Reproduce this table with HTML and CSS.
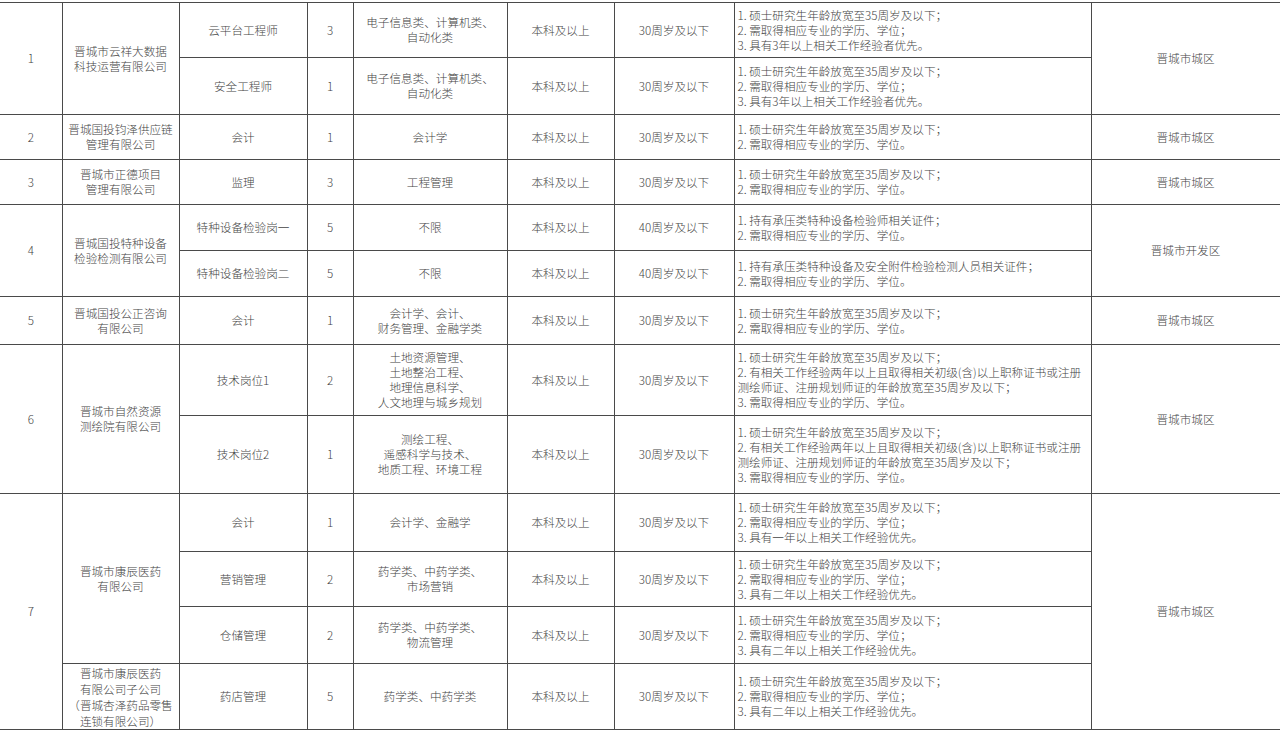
FILE: index.html
```html
<!DOCTYPE html>
<html lang="zh-CN">
<head>
<meta charset="utf-8">
<title>招聘岗位表</title>
<link rel="stylesheet" href="styles.css">
</head>
<body>
<div class="page">
<table class="jobs">
  <colgroup>
    <col class="c-no"><col class="c-co"><col class="c-pos"><col class="c-num"><col class="c-major"><col class="c-edu"><col class="c-age"><col class="c-req"><col class="c-loc">
  </colgroup>
  <tbody>
    <tr class="h55">
      <td rowspan="2" class="first">1</td>
      <td rowspan="2">晋城市云祥大数据<br>科技运营有限公司</td>
      <td>云平台工程师</td>
      <td>3</td>
      <td>电子信息类、计算机类、<br>自动化类</td>
      <td>本科及以上</td>
      <td class="soft-l">30周岁及以下</td>
      <td class="req">1. 硕士研究生年龄放宽至35周岁及以下；<br>2. 需取得相应专业的学历、学位；<br>3. 具有3年以上相关工作经验者优先。</td>
      <td rowspan="2">晋城市城区</td>
    </tr>
    <tr class="h57 sub">
      <td>安全工程师</td>
      <td>1</td>
      <td>电子信息类、计算机类、<br>自动化类</td>
      <td>本科及以上</td>
      <td class="soft-l">30周岁及以下</td>
      <td class="req">1. 硕士研究生年龄放宽至35周岁及以下；<br>2. 需取得相应专业的学历、学位；<br>3. 具有3年以上相关工作经验者优先。</td>
    </tr>
    <tr class="h45">
      <td class="first">2</td>
      <td>晋城国投钧泽供应链<br>管理有限公司</td>
      <td>会计</td>
      <td>1</td>
      <td>会计学</td>
      <td>本科及以上</td>
      <td class="soft-l">30周岁及以下</td>
      <td class="req">1. 硕士研究生年龄放宽至35周岁及以下；<br>2. 需取得相应专业的学历、学位。</td>
      <td>晋城市城区</td>
    </tr>
    <tr class="h45">
      <td class="first">3</td>
      <td>晋城市正德项目<br>管理有限公司</td>
      <td>监理</td>
      <td>3</td>
      <td>工程管理</td>
      <td>本科及以上</td>
      <td class="soft-l">30周岁及以下</td>
      <td class="req">1. 硕士研究生年龄放宽至35周岁及以下；<br>2. 需取得相应专业的学历、学位。</td>
      <td>晋城市城区</td>
    </tr>
    <tr class="h46">
      <td rowspan="2" class="first">4</td>
      <td rowspan="2">晋城国投特种设备<br>检验检测有限公司</td>
      <td>特种设备检验岗一</td>
      <td>5</td>
      <td>不限</td>
      <td>本科及以上</td>
      <td class="soft-l">40周岁及以下</td>
      <td class="req">1. 持有承压类特种设备检验师相关证件；<br>2. 需取得相应专业的学历、学位。</td>
      <td rowspan="2">晋城市开发区</td>
    </tr>
    <tr class="h46 sub">
      <td>特种设备检验岗二</td>
      <td>5</td>
      <td>不限</td>
      <td>本科及以上</td>
      <td class="soft-l">40周岁及以下</td>
      <td class="req">1. 持有承压类特种设备及安全附件检验检测人员相关证件；<br>2. 需取得相应专业的学历、学位。</td>
    </tr>
    <tr class="h48">
      <td class="first">5</td>
      <td>晋城国投公正咨询<br>有限公司</td>
      <td>会计</td>
      <td>1</td>
      <td>会计学、会计、<br>财务管理、金融学类</td>
      <td>本科及以上</td>
      <td class="soft-l">30周岁及以下</td>
      <td class="req">1. 硕士研究生年龄放宽至35周岁及以下；<br>2. 需取得相应专业的学历、学位。</td>
      <td>晋城市城区</td>
    </tr>
    <tr class="h71">
      <td rowspan="2" class="first">6</td>
      <td rowspan="2">晋城市自然资源<br>测绘院有限公司</td>
      <td>技术岗位1</td>
      <td>2</td>
      <td>土地资源管理、<br>土地整治工程、<br>地理信息科学、<br>人文地理与城乡规划</td>
      <td>本科及以上</td>
      <td class="soft-l">30周岁及以下</td>
      <td class="req">1. 硕士研究生年龄放宽至35周岁及以下；<br>2. 有相关工作经验两年以上且取得相关初级(含)以上职称证书或注册<br>测绘师证、注册规划师证的年龄放宽至35周岁及以下；<br>3. 需取得相应专业的学历、学位。</td>
      <td rowspan="2">晋城市城区</td>
    </tr>
    <tr class="h78 sub">
      <td>技术岗位2</td>
      <td>1</td>
      <td>测绘工程、<br>遥感科学与技术、<br>地质工程、环境工程</td>
      <td>本科及以上</td>
      <td class="soft-l">30周岁及以下</td>
      <td class="req">1. 硕士研究生年龄放宽至35周岁及以下；<br>2. 有相关工作经验两年以上且取得相关初级(含)以上职称证书或注册<br>测绘师证、注册规划师证的年龄放宽至35周岁及以下；<br>3. 需取得相应专业的学历、学位。</td>
    </tr>
    <tr class="h58">
      <td rowspan="4" class="first">7</td>
      <td rowspan="3">晋城市康辰医药<br>有限公司</td>
      <td>会计</td>
      <td>1</td>
      <td>会计学、金融学</td>
      <td>本科及以上</td>
      <td class="soft-l">30周岁及以下</td>
      <td class="req">1. 硕士研究生年龄放宽至35周岁及以下；<br>2. 需取得相应专业的学历、学位；<br>3. 具有一年以上相关工作经验优先。</td>
      <td rowspan="4">晋城市城区</td>
    </tr>
    <tr class="h55 sub">
      <td>营销管理</td>
      <td>2</td>
      <td>药学类、中药学类、<br>市场营销</td>
      <td>本科及以上</td>
      <td class="soft-l">30周岁及以下</td>
      <td class="req">1. 硕士研究生年龄放宽至35周岁及以下；<br>2. 需取得相应专业的学历、学位；<br>3. 具有二年以上相关工作经验优先。</td>
    </tr>
    <tr class="h57 sub">
      <td>仓储管理</td>
      <td>2</td>
      <td>药学类、中药学类、<br>物流管理</td>
      <td>本科及以上</td>
      <td class="soft-l">30周岁及以下</td>
      <td class="req">1. 硕士研究生年龄放宽至35周岁及以下；<br>2. 需取得相应专业的学历、学位；<br>3. 具有二年以上相关工作经验优先。</td>
    </tr>
    <tr class="h66">
      <td class="tall">晋城市康辰医药<br>有限公司子公司<br>（晋城杏泽药品零售<br>连锁有限公司）</td>
      <td>药店管理</td>
      <td>5</td>
      <td>药学类、中药学类</td>
      <td>本科及以上</td>
      <td class="soft-l">30周岁及以下</td>
      <td class="req">1. 硕士研究生年龄放宽至35周岁及以下；<br>2. 需取得相应专业的学历、学位；<br>3. 具有二年以上相关工作经验优先。</td>
    </tr>
  </tbody>
</table>
</div>
</body>
</html>
```
FILE: styles.css
```css
html, body {
  margin: 0;
  padding: 0;
  background: #ffffff;
}

.page {
  padding-top: 2px;
  width: 1280px;
  overflow: hidden;
}

.jobs {
  border-collapse: collapse;
  table-layout: fixed;
  width: 1280px;
  font-family: "Noto Sans CJK SC", "Noto Sans", sans-serif;
  font-size: 11.6px;
  font-weight: 300;
  line-height: 15px;
  color: #444444;
}

.c-no { width: 62px; }
.c-co { width: 117px; }
.c-pos { width: 128px; }
.c-num { width: 46px; }
.c-major { width: 154px; }
.c-edu { width: 107px; }
.c-age { width: 120px; }
.c-req { width: 357px; }
.c-loc { width: 189px; }

.jobs td {
  border: 1px solid #4a4a4a;
  padding: 0 2px;
  text-align: center;
  vertical-align: middle;
  white-space: nowrap;
  overflow: hidden;
}

.jobs td.first {
  border-left: 0;
}

.jobs td.req {
  text-align: left;
  padding-left: 3px;
}

.jobs td.soft-l {
  border-left-color: #9a9a9a;
}

.jobs tr.sub td {
  border-top-color: #8c8c8c;
}

.jobs td.tall {
  line-height: 16px;
}

.h45 { height: 45px; }
.h46 { height: 46px; }
.h48 { height: 48px; }
.h55 { height: 55px; }
.h57 { height: 57px; }
.h58 { height: 58px; }
.h66 { height: 66px; }
.h71 { height: 71px; }
.h78 { height: 78px; }
```
